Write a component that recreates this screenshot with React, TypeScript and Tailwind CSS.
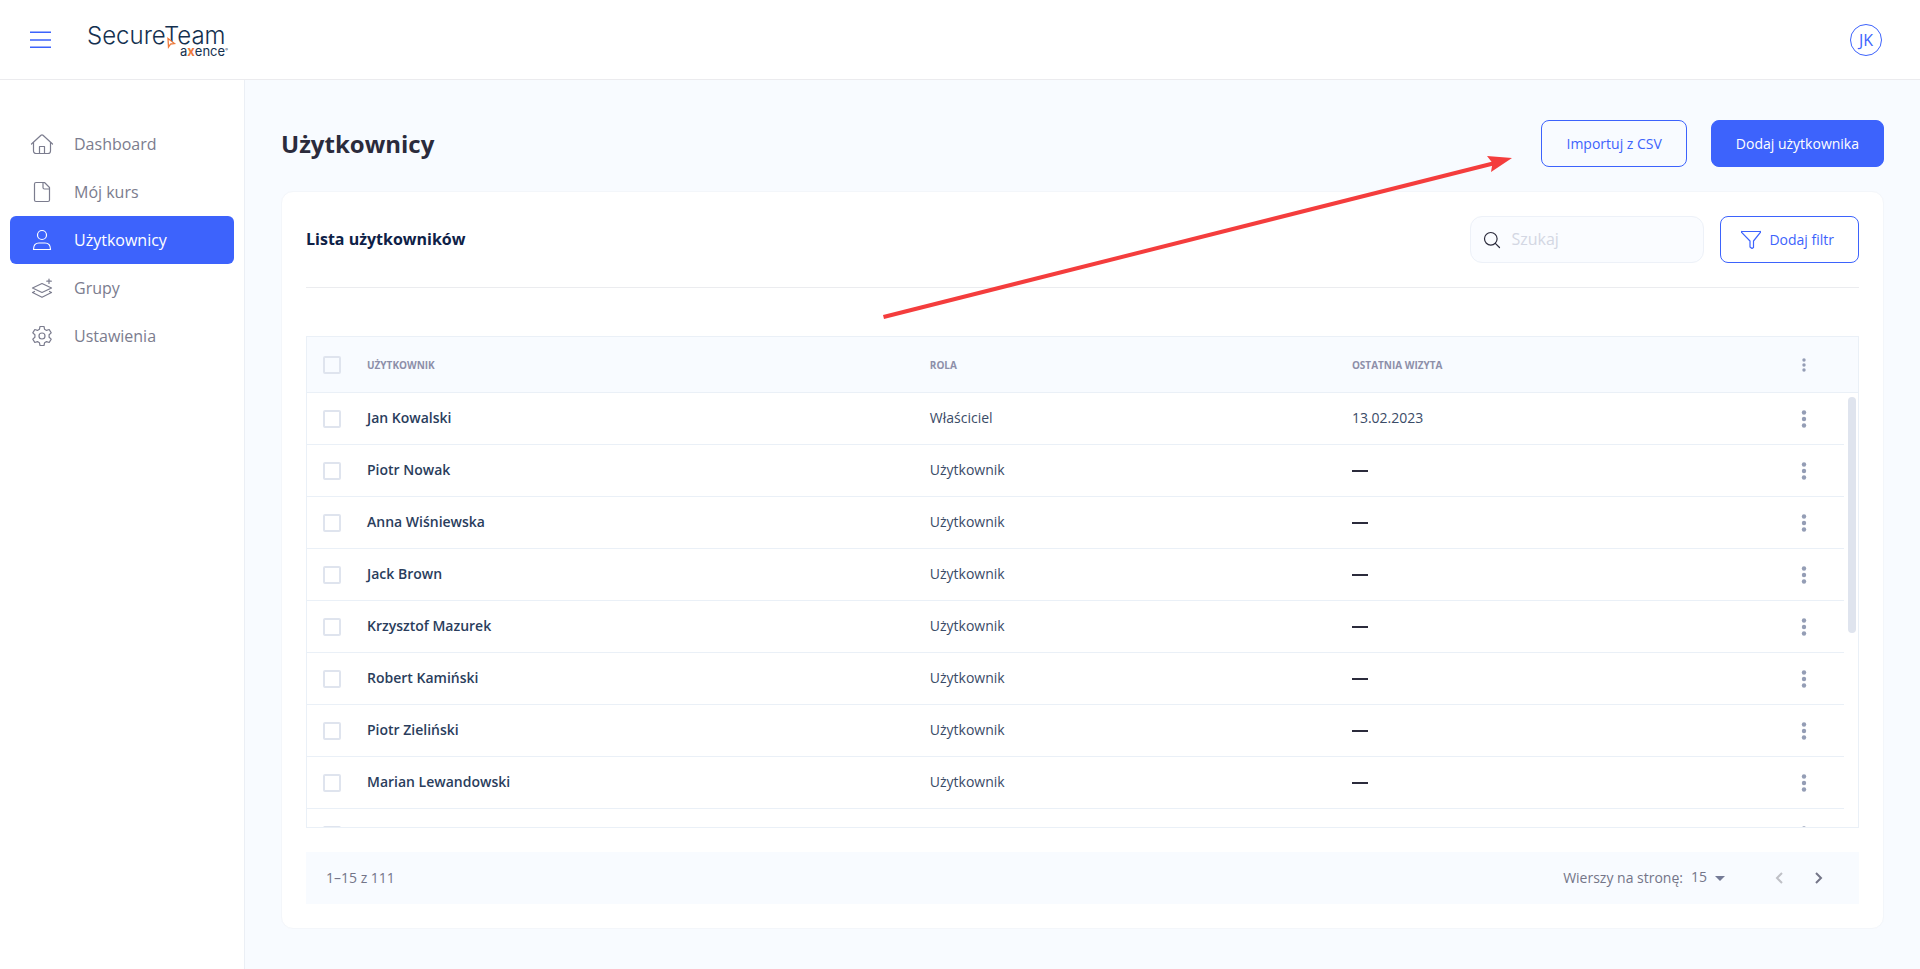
import type { ReactNode } from 'react';

interface User {
  name: string;
  role: string;
  lastVisit?: string;
}

const USERS: User[] = [
  { name: 'Jan Kowalski', role: 'Właściciel', lastVisit: '13.02.2023' },
  { name: 'Piotr Nowak', role: 'Użytkownik' },
  { name: 'Anna Wiśniewska', role: 'Użytkownik' },
  { name: 'Jack Brown', role: 'Użytkownik' },
  { name: 'Krzysztof Mazurek', role: 'Użytkownik' },
  { name: 'Robert Kamiński', role: 'Użytkownik' },
  { name: 'Piotr Zieliński', role: 'Użytkownik' },
  { name: 'Marian Lewandowski', role: 'Użytkownik' },
];

const rowGrid = 'grid grid-cols-[60px_4fr_3fr_3fr_70px_14px]';
const cell = 'flex items-center border-b border-[#eaf0f7]';

function NavIcon({ children }: { children: ReactNode }) {
  return (
    <svg
      width="24"
      height="24"
      viewBox="0 0 24 24"
      fill="none"
      stroke="currentColor"
      strokeWidth="1.2"
      strokeLinecap="round"
      strokeLinejoin="round"
      aria-hidden="true"
    >
      {children}
    </svg>
  );
}

const NAV_ITEMS = [
  {
    label: 'Dashboard',
    icon: (
      <NavIcon>
        <path d="M1.5 12 11 3.2a1.5 1.5 0 0 1 2 0L22.5 12" />
        <path d="M3.5 10.5V19a2.5 2.5 0 0 0 2.5 2.5h12a2.5 2.5 0 0 0 2.5-2.5v-8.5" />
        <path d="M9.5 21.5v-7h5v7" />
      </NavIcon>
    ),
  },
  {
    label: 'Mój kurs',
    icon: (
      <NavIcon>
        <path d="M6 2.5h8.5l5 5V20a1.5 1.5 0 0 1-1.5 1.5H6A1.5 1.5 0 0 1 4.5 20V4A1.5 1.5 0 0 1 6 2.5Z" />
        <path d="M13 2.5V7.500a1.5 1.5 0 0 0 1.5 1.5h5" />
      </NavIcon>
    ),
  },
  {
    label: 'Użytkownicy',
    active: true,
    icon: (
      <NavIcon>
        <circle cx="12" cy="7" r="4.5" />
        <path d="M3.5 21.5c0-4 2-6.5 5.5-6.5h6c3.5 0 5.5 2.5 5.5 6.5Z" />
      </NavIcon>
    ),
  },
  {
    label: 'Grupy',
    icon: (
      <NavIcon>
        <path d="m12 7.5 9.5 4.5-9.5 4.5L2.5 12Z" />
        <path d="m4.5 15.5-2 1 9.5 4.8 9.5-4.8-2-1" />
        <path d="M19 3v4.5M16.8 5.2h4.5" />
      </NavIcon>
    ),
  },
  {
    label: 'Ustawienia',
    icon: (
      <NavIcon>
        <path d="M10 2.5h4l.6 2.8 1.9 1.1 2.7-.9 2 3.4-2.1 1.9v2.4l2.1 1.9-2 3.4-2.7-.9-1.9 1.1-.6 2.8h-4l-.6-2.8-1.9-1.1-2.7.9-2-3.4 2.1-1.9v-2.4L2.8 8.9l2-3.4 2.7.9 1.9-1.1Z" />
        <circle cx="12" cy="12" r="3" />
      </NavIcon>
    ),
  },
];

function Logo() {
  return (
    <svg width="150" height="48" viewBox="-1 -6 150 48" role="img" aria-label="SecureTeam axence">
      <g fontFamily="Inter, sans-serif" fill="#14304f">
        <text x="-1" y="22" fontSize="24" fontWeight="300">
          SecureTeam
        </text>
        <text x="92" y="34" fontSize="13">
          a
          <tspan fill="#ee7a3b" fontWeight="700">
            x
          </tspan>
          ence
          <tspan fontSize="4" dy="-5">
            ®
          </tspan>
        </text>
      </g>
      <path d="m80 16.5 6.5 5-4 .6-2 3Z" fill="#fff" stroke="#ee7a3b" strokeWidth="1.3" />
    </svg>
  );
}

function Dots({ size = 18 }: { size?: number }) {
  return (
    <svg width="6" height={size} viewBox="0 0 6 18" fill="#949db5" aria-hidden="true">
      <circle cx="3" cy="2.5" r="2.2" />
      <circle cx="3" cy="9" r="2.2" />
      <circle cx="3" cy="15.5" r="2.2" />
    </svg>
  );
}

function Checkbox({ label }: { label: string }) {
  return (
    <input
      type="checkbox"
      aria-label={label}
      className="size-[18px] appearance-none rounded-xs border-2 border-[#dfe4ee] checked:bg-[#3d63fc]"
    />
  );
}

function TableRow({ user }: { user: User }) {
  return (
    <tr className={`${rowGrid} h-[52px]`}>
      <td className={`${cell} pl-4`}>
        <Checkbox label={user.name} />
      </td>
      <td className={`${cell} pb-0.5 font-semibold text-[#2a3d5c]`}>{user.name}</td>
      <td className={`${cell} pb-0.5`}>{user.role}</td>
      {user.lastVisit ? (
        <td className={`${cell} pb-0.5`}>{user.lastVisit}</td>
      ) : (
        <td className={cell}>
          <span className="h-0.5 w-4 bg-[#2b2b3c]" />
        </td>
      )}
      <td className={`${cell} justify-center pr-2.5`}>
        <button type="button" aria-label={`Akcje: ${user.name}`}>
          <Dots />
        </button>
      </td>
    </tr>
  );
}

export default function App() {
  return (
    <div className="relative flex min-h-screen flex-col bg-[#f8fbff] font-['Open_Sans',sans-serif]">
      <header className="flex h-20 items-center border-b border-[#ebebee] bg-white pr-[38px] pl-[30px]">
        <button type="button" aria-label="Menu" className="text-[#3d63fc]">
          <svg width="21" height="18" viewBox="0 0 21 18" stroke="currentColor" strokeWidth="1.5">
            <path d="M0 1.3h21M0 8.9h21M0 16.3h21" />
          </svg>
        </button>
        <a href="#" className="ml-9">
          <Logo />
        </a>
        <button
          type="button"
          className="ml-auto flex size-8 items-center justify-center rounded-full border border-[#3d63fc] text-base text-[#3d63fc]"
        >
          JK
        </button>
      </header>

      <div className="flex flex-1">
        <aside className="w-[245px] shrink-0 border-r border-[#ebeff5] bg-white px-2.5 pt-10">
          <nav>
            {NAV_ITEMS.map((item) => (
              <a
                key={item.label}
                href="#"
                className={`flex h-12 items-center gap-5 rounded-md pl-5 text-base ${
                  item.active ? 'bg-[#3d63fc] text-white' : 'text-[#7b7c8e]'
                }`}
              >
                {item.icon}
                {item.label}
              </a>
            ))}
          </nav>
        </aside>

        <main className="min-w-0 flex-1 px-9 py-10">
          <div className="flex items-center justify-between">
            <h1 className="text-2xl font-bold text-[#2b2b3c]">Użytkownicy</h1>
            <div className="flex gap-6">
              <button
                type="button"
                className="h-[47px] rounded-lg border border-[#3d63fc] px-6 text-sm text-[#3d63fc]"
              >
                Importuj z CSV
              </button>
              <button
                type="button"
                className="h-[47px] rounded-lg border border-[#3d63fc] bg-[#3d63fc] px-6 text-sm text-white"
              >
                Dodaj użytkownika
              </button>
            </div>
          </div>

          <section className="mt-6 rounded-xl border border-[#f3f6fa] bg-white p-6">
            <div className="flex items-center justify-between border-b border-[#ebecef] pb-6">
              <h2 className="pb-0.5 text-base font-bold text-[#0e2147]">Lista użytkowników</h2>
              <div className="flex gap-4">
                <label className="flex h-[47px] w-[234px] items-center gap-2.5 rounded-xl border border-[#edf1f8] bg-[#fafcff] px-3">
                  <svg
                    width="18"
                    height="18"
                    viewBox="0 0 18 18"
                    fill="none"
                    stroke="#2b2b3c"
                    strokeWidth="1.2"
                    strokeLinecap="round"
                    className="shrink-0"
                    aria-hidden="true"
                  >
                    <circle cx="7.8" cy="7.8" r="6.3" />
                    <path d="m12.3 12.3 4.2 4.2" />
                  </svg>
                  <input
                    type="text"
                    placeholder="Szukaj"
                    aria-label="Szukaj"
                    className="w-full min-w-0 bg-transparent pb-0.5 text-base outline-none placeholder:text-[#d3d7e3]"
                  />
                </label>
                <button
                  type="button"
                  className="flex h-[47px] items-center gap-2 rounded-lg border border-[#3d63fc] pr-6 pl-5 text-sm text-[#3d63fc]"
                >
                  <svg
                    width="20"
                    height="20"
                    viewBox="0 0 20 20"
                    fill="none"
                    stroke="currentColor"
                    strokeWidth="1.2"
                    strokeLinejoin="round"
                    aria-hidden="true"
                  >
                    <path d="M1 1.5h18a.5.5 0 0 1 .4.9L12.5 11v6.5l-1.5 1-2-1.5v-6L.6 2.4a.5.5 0 0 1 .4-.9Z" />
                  </svg>
                  Dodaj filtr
                </button>
              </div>
            </div>

            <div className="relative mt-12 h-[492px] overflow-hidden border border-[#eaf0f7]">
              <table className="block text-sm text-[#3a4b67]">
                <thead className="block">
                  <tr
                    className={`${rowGrid} h-14 border-b border-[#eaf0f7] bg-[#f8fbff] text-left text-[10px] text-[#8d8fa9] uppercase`}
                  >
                    <th className="flex items-center pl-4">
                      <Checkbox label="Zaznacz wszystkich" />
                    </th>
                    <th className="flex items-center pt-0.5">Użytkownik</th>
                    <th className="flex items-center pt-0.5">Rola</th>
                    <th className="flex items-center pt-0.5">Ostatnia wizyta</th>
                    <th className="flex items-center justify-center pr-2.5">
                      <button type="button" aria-label="Opcje kolumn">
                        <Dots size={14} />
                      </button>
                    </th>
                  </tr>
                </thead>
                <tbody className="block">
                  {USERS.map((user) => (
                    <TableRow key={user.name} user={user} />
                  ))}
                  {/* next row peeks in at the bottom edge */}
                  <TableRow user={{ name: '', role: '' }} />
                </tbody>
              </table>
              {/* scrollbar thumb */}
              <div className="absolute top-[60px] right-0.5 h-[236px] w-2 rounded-full bg-[#dfe4ee]" />
            </div>

            <div className="mt-6 flex h-[52px] items-center bg-[#f8fbff] px-5 text-sm text-[#747588]">
              <span>1–15 z 111</span>
              <label htmlFor="rows" className="ml-auto">
                Wierszy na stronę:
              </label>
              <div className="relative flex items-center">
                <select
                  id="rows"
                  defaultValue="15"
                  className="w-12 appearance-none bg-transparent pb-0.5 pl-2 text-sm outline-none"
                >
                  <option>15</option>
                  <option>25</option>
                  <option>50</option>
                </select>
                <svg
                  width="10"
                  height="5"
                  viewBox="0 0 10 5"
                  fill="#747b96"
                  className="pointer-events-none absolute right-1.5"
                  aria-hidden="true"
                >
                  <path d="M0 0h10L5 5Z" />
                </svg>
              </div>
              <div className="ml-7 flex">
                <button
                  type="button"
                  disabled
                  aria-label="Poprzednia strona"
                  className="flex size-10 items-center justify-center text-[#bfc0c6]"
                >
                  <svg width="8" height="12" viewBox="0 0 8 12" fill="none" stroke="currentColor" strokeWidth="2">
                    <path d="M7 1 2 6l5 5" />
                  </svg>
                </button>
                <button
                  type="button"
                  aria-label="Następna strona"
                  className="flex size-10 items-center justify-center"
                >
                  <svg width="8" height="12" viewBox="0 0 8 12" fill="none" stroke="currentColor" strokeWidth="2">
                    <path d="m1 1 5 5-5 5" />
                  </svg>
                </button>
              </div>
            </div>
          </section>
        </main>
      </div>

      {/* arrow pointing at the import button */}
      <svg
        width="632"
        height="168"
        viewBox="0 0 632 168"
        className="pointer-events-none absolute top-[155px] right-[405px]"
        aria-hidden="true"
      >
        <path d="M.5 162 612 8" stroke="#f43d3d" strokeWidth="4" fill="none" />
        <path d="M629 3 604 1l5.5 7L608 17Z" fill="#f43d3d" />
      </svg>
    </div>
  );
}
